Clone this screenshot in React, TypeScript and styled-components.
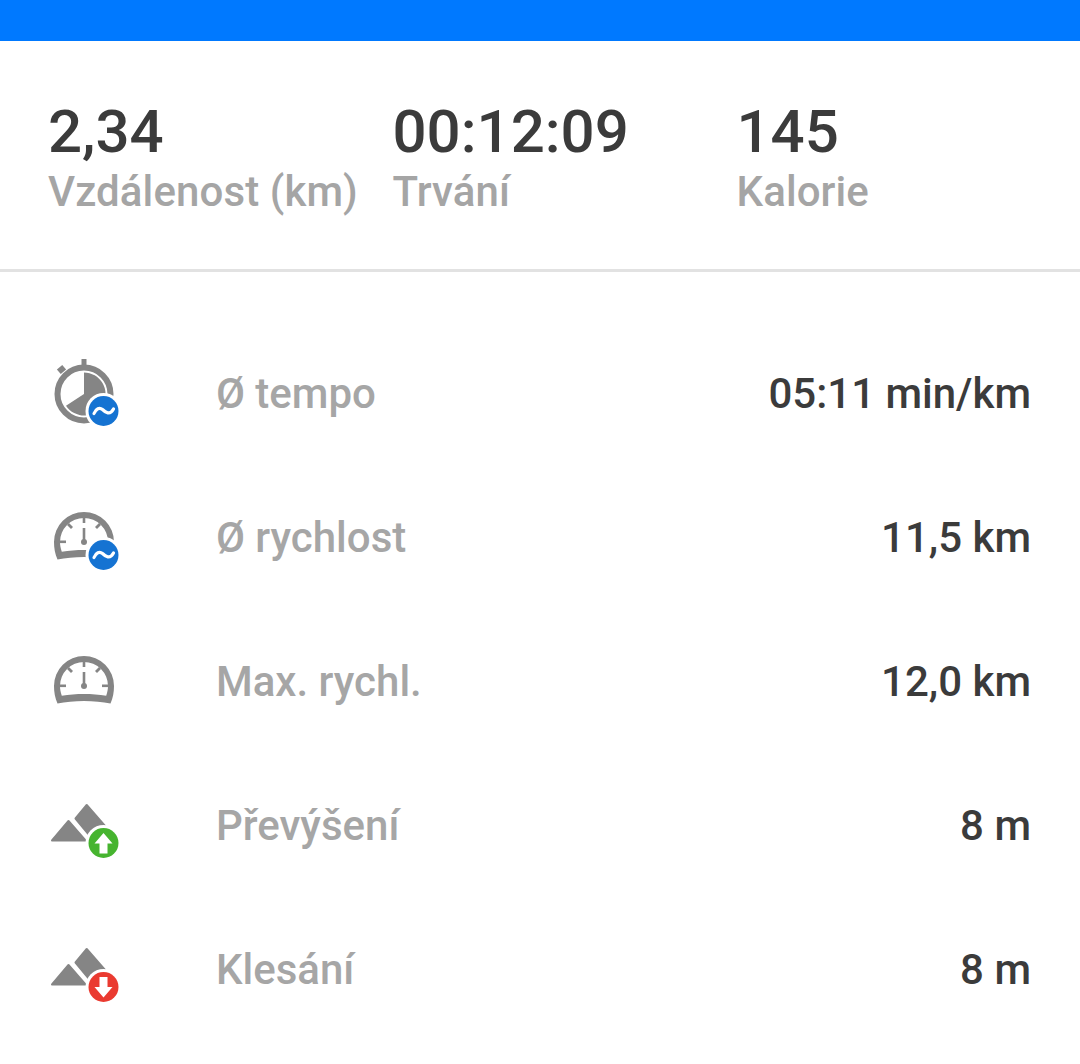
import React from "react";
import styled, { createGlobalStyle } from "styled-components";

const Global = createGlobalStyle`
  html, body { margin: 0; padding: 0; background: #fff; }
  body { font-family: Roboto, "Noto Sans", sans-serif; }
`;

const Page = styled.div`
  width: 1080px;
  height: 1064px;
  overflow: hidden;
  background: #fff;
`;

const TopBar = styled.div`
  height: 41px;
  background: #0079ff;
`;

const Stats = styled.section`
  display: grid;
  grid-template-columns: 344.5px 344px 1fr;
  height: 231px;
  padding-left: 48px;
  box-sizing: border-box;
  padding-top: 56px;
  border-bottom: 3px solid #e2e2e2;
`;

const Stat = styled.div`
  display: flex;
  flex-direction: column;
`;

const StatValue = styled.div`
  font-size: 60px;
  line-height: 70px;
  font-weight: 500;
  color: #3b3b3b;
`;

const StatLabel = styled.div`
  font-size: 42px;
  line-height: 50px;
  font-weight: 500;
  letter-spacing: 0.1px;
  color: #a5a5a5;
  white-space: nowrap;
`;

const List = styled.div`
  padding-top: 50px;
`;

const Row = styled.div`
  display: flex;
  align-items: center;
  height: 144px;
  padding: 0 49px 0 40px;
`;

const IconBox = styled.svg`
  flex: 0 0 90px;
  width: 90px;
  height: 90px;
  margin-right: 86px;
`;

const Label = styled.div`
  flex: 1;
  font-size: 42px;
  font-weight: 500;
  color: #a6a6a6;
  padding-bottom: 2px;
`;

const Value = styled.div`
  font-size: 42px;
  font-weight: 500;
  color: #3b3b3b;
  padding-bottom: 2px;
`;

const GREY = "#858585";

const Wave = () => (
  <g>
    <circle cx="63.5" cy="62" r="18" fill="#fff" />
    <circle cx="63.5" cy="62" r="15" fill="#1573d2" />
    <path
      d="M54 64.500 C56 59.500 59.500 58 62.500 60.500 C65.500 63.500 70 66.500 73.500 60"
      fill="none"
      stroke="#fff"
      strokeWidth="3.2"
      strokeLinecap="round"
    />
  </g>
);

const Gauge = () => (
  <g fill={GREY}>
    <path
      fillRule="evenodd"
      d="M17.500 66.500 C15 61 14 55 14 49 A30 30 0 0 1 74 49 C74 55 73 61 70.500 66.500 C55 63 33 63 17.500 66.500 Z M21.800 58.800 C20.500 55 20 52 20 49 A24 24 0 0 1 68 49 C68 52 67.500 55 66.200 58.800 C52 56.300 36 56.300 21.800 58.800 Z"
    />
    <rect x="42.700" y="24" width="2.600" height="6" />
    <rect x="20" y="47.500" width="6" height="2.600" />
    <rect x="62" y="47.500" width="6" height="2.600" />
    <path d="M27 32 L29 30 L33 34 L31 36 Z M61 32 L59 30 L55 34 L57 36 Z" />
    <rect x="42.700" y="35" width="2.600" height="13" />
    <circle cx="44" cy="49" r="3" />
  </g>
);

const Mountains = () => (
  <g fill={GREY} stroke={GREY} strokeWidth="2" strokeLinejoin="round">
    <path d="M28.500 40 L12 59.500 L45.500 59.500 Z" />
    <path d="M46.700 24 L35.500 37.500 L50 55 L65 45 Z" />
  </g>
);

const Arrow = ({ color, down }: { color: string; down?: boolean }) => (
  <g>
    <circle cx="63.5" cy="62" r="18" fill="#fff" />
    <circle cx="63.5" cy="62" r="15" fill={color} />
    <path
      d={
        down
          ? "M63.500 72.500 L54.500 62 L59.500 62 L59.500 52 L67.500 52 L67.500 62 L72.500 62 Z"
          : "M63.500 52 L72.500 62.500 L67.500 62.500 L67.500 72.500 L59.500 72.500 L59.500 62.500 L54.500 62.500 Z"
      }
      fill="#fff"
    />
  </g>
);

const Stopwatch = () => (
  <g fill={GREY}>
    <circle cx="44" cy="45" r="26.500" fill="none" stroke={GREY} strokeWidth="6" />
    <rect x="41.500" y="10" width="5" height="7" />
    <rect x="18" y="17.500" width="7" height="6" transform="rotate(-40 21.500 20.500)" />
    <path d="M44 45 L44 23.500 A21.500 21.500 0 1 1 26 56.700 Z" />
  </g>
);

const rows = [
  { label: "Ø tempo", value: "05:11 min/km", icon: <><Stopwatch /><Wave /></> },
  { label: "Ø rychlost", value: "11,5 km", icon: <><Gauge /><Wave /></> },
  { label: "Max. rychl.", value: "12,0 km", icon: <Gauge /> },
  { label: "Převýšení", value: "8 m", icon: <><Mountains /><Arrow color="#46b42f" /></> },
  { label: "Klesání", value: "8 m", icon: <><Mountains /><Arrow color="#ea3a30" down /></> },
];

const stats = [
  { value: "2,34", label: "Vzdálenost (km)" },
  { value: "00:12:09", label: "Trvání" },
  { value: "145", label: "Kalorie" },
];

export default function App() {
  return (
    <Page>
      <Global />
      <TopBar />
      <Stats>
        {stats.map((s) => (
          <Stat key={s.label}>
            <StatValue>{s.value}</StatValue>
            <StatLabel>{s.label}</StatLabel>
          </Stat>
        ))}
      </Stats>
      <List>
        {rows.map((r) => (
          <Row key={r.label}>
            <IconBox viewBox="0 0 90 90">{r.icon}</IconBox>
            <Label>{r.label}</Label>
            <Value>{r.value}</Value>
          </Row>
        ))}
      </List>
    </Page>
  );
}
